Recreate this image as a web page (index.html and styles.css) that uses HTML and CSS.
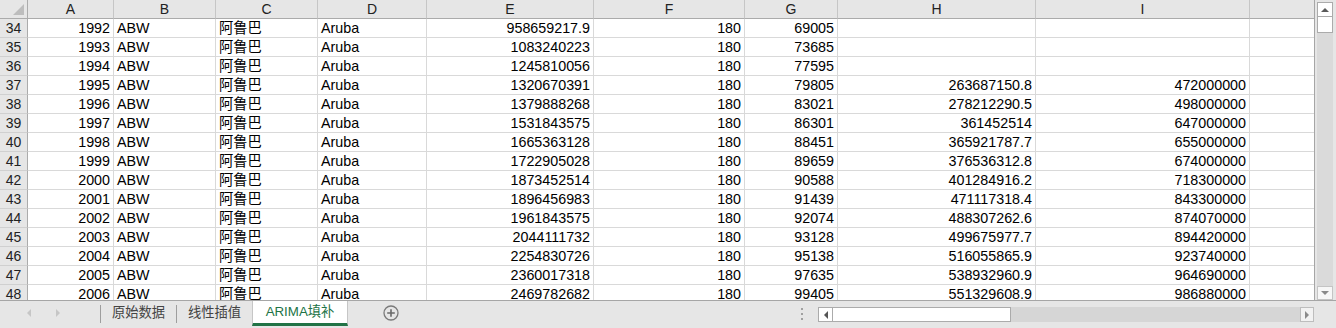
FILE: index.html
```html
<!DOCTYPE html>
<html lang="zh">
<head>
<meta charset="utf-8">
<title>ARIMA填补</title>
<link rel="stylesheet" href="styles.css">
</head>
<body>
<div class="app">
  <div class="main">
    <div class="sheet">
      <div class="corner"><svg class="tri" width="11" height="11" viewBox="0 0 11 11"><polygon points="11,0 11,11 0,11" fill="#bdbdbd"/></svg></div>
      <div class="ch">A</div><div class="ch">B</div><div class="ch">C</div><div class="ch">D</div><div class="ch">E</div><div class="ch">F</div><div class="ch">G</div><div class="ch">H</div><div class="ch">I</div><div class="ch last"></div>

      <div class="rh">34</div><div class="c n">1992</div><div class="c">ABW</div><div class="c">阿鲁巴</div><div class="c">Aruba</div><div class="c n">958659217.9</div><div class="c n">180</div><div class="c n">69005</div><div class="c n"></div><div class="c n"></div><div class="c last"></div>
      <div class="rh">35</div><div class="c n">1993</div><div class="c">ABW</div><div class="c">阿鲁巴</div><div class="c">Aruba</div><div class="c n">1083240223</div><div class="c n">180</div><div class="c n">73685</div><div class="c n"></div><div class="c n"></div><div class="c last"></div>
      <div class="rh">36</div><div class="c n">1994</div><div class="c">ABW</div><div class="c">阿鲁巴</div><div class="c">Aruba</div><div class="c n">1245810056</div><div class="c n">180</div><div class="c n">77595</div><div class="c n"></div><div class="c n"></div><div class="c last"></div>
      <div class="rh">37</div><div class="c n">1995</div><div class="c">ABW</div><div class="c">阿鲁巴</div><div class="c">Aruba</div><div class="c n">1320670391</div><div class="c n">180</div><div class="c n">79805</div><div class="c n">263687150.8</div><div class="c n">472000000</div><div class="c last"></div>
      <div class="rh">38</div><div class="c n">1996</div><div class="c">ABW</div><div class="c">阿鲁巴</div><div class="c">Aruba</div><div class="c n">1379888268</div><div class="c n">180</div><div class="c n">83021</div><div class="c n">278212290.5</div><div class="c n">498000000</div><div class="c last"></div>
      <div class="rh">39</div><div class="c n">1997</div><div class="c">ABW</div><div class="c">阿鲁巴</div><div class="c">Aruba</div><div class="c n">1531843575</div><div class="c n">180</div><div class="c n">86301</div><div class="c n">361452514</div><div class="c n">647000000</div><div class="c last"></div>
      <div class="rh">40</div><div class="c n">1998</div><div class="c">ABW</div><div class="c">阿鲁巴</div><div class="c">Aruba</div><div class="c n">1665363128</div><div class="c n">180</div><div class="c n">88451</div><div class="c n">365921787.7</div><div class="c n">655000000</div><div class="c last"></div>
      <div class="rh">41</div><div class="c n">1999</div><div class="c">ABW</div><div class="c">阿鲁巴</div><div class="c">Aruba</div><div class="c n">1722905028</div><div class="c n">180</div><div class="c n">89659</div><div class="c n">376536312.8</div><div class="c n">674000000</div><div class="c last"></div>
      <div class="rh">42</div><div class="c n">2000</div><div class="c">ABW</div><div class="c">阿鲁巴</div><div class="c">Aruba</div><div class="c n">1873452514</div><div class="c n">180</div><div class="c n">90588</div><div class="c n">401284916.2</div><div class="c n">718300000</div><div class="c last"></div>
      <div class="rh">43</div><div class="c n">2001</div><div class="c">ABW</div><div class="c">阿鲁巴</div><div class="c">Aruba</div><div class="c n">1896456983</div><div class="c n">180</div><div class="c n">91439</div><div class="c n">471117318.4</div><div class="c n">843300000</div><div class="c last"></div>
      <div class="rh">44</div><div class="c n">2002</div><div class="c">ABW</div><div class="c">阿鲁巴</div><div class="c">Aruba</div><div class="c n">1961843575</div><div class="c n">180</div><div class="c n">92074</div><div class="c n">488307262.6</div><div class="c n">874070000</div><div class="c last"></div>
      <div class="rh">45</div><div class="c n">2003</div><div class="c">ABW</div><div class="c">阿鲁巴</div><div class="c">Aruba</div><div class="c n">2044111732</div><div class="c n">180</div><div class="c n">93128</div><div class="c n">499675977.7</div><div class="c n">894420000</div><div class="c last"></div>
      <div class="rh">46</div><div class="c n">2004</div><div class="c">ABW</div><div class="c">阿鲁巴</div><div class="c">Aruba</div><div class="c n">2254830726</div><div class="c n">180</div><div class="c n">95138</div><div class="c n">516055865.9</div><div class="c n">923740000</div><div class="c last"></div>
      <div class="rh">47</div><div class="c n">2005</div><div class="c">ABW</div><div class="c">阿鲁巴</div><div class="c">Aruba</div><div class="c n">2360017318</div><div class="c n">180</div><div class="c n">97635</div><div class="c n">538932960.9</div><div class="c n">964690000</div><div class="c last"></div>
      <div class="rh">48</div><div class="c n">2006</div><div class="c">ABW</div><div class="c">阿鲁巴</div><div class="c">Aruba</div><div class="c n">2469782682</div><div class="c n">180</div><div class="c n">99405</div><div class="c n">551329608.9</div><div class="c n">986880000</div><div class="c last"></div>
    </div>
    <div class="vscroll">
      <div class="vtrack">
        <div class="vbtn up"><span class="tri-up"></span></div>
        <div class="vthumb"></div>
        <div class="vspace"></div>
        <div class="vbtn down"><span class="tri-down"></span></div>
      </div>
    </div>
  </div>
  <div class="bar">
    <div class="nav"><span class="tri-left light"></span><span class="tri-right light"></span></div>
    <span class="sep"></span>
    <div class="tab">原始数据</div>
    <span class="sep"></span>
    <div class="tab">线性插值</div>
    <div class="tab active">ARIMA填补</div>
    <div class="add"><svg width="16" height="16" viewBox="0 0 16 16"><circle cx="8" cy="8" r="7" fill="none" stroke="#7a7a7a" stroke-width="1.3"/><path d="M8 4.2V11.8M4.2 8H11.8" stroke="#6a6a6a" stroke-width="1.6"/></svg></div>
    <div class="spacer"></div>
    <div class="dots"><i></i><i></i><i></i></div>
    <div class="hscroll">
      <div class="hbtn left"><span class="tri-left"></span></div>
      <div class="hthumb"></div>
      <div class="htrack"></div>
      <div class="hbtn right"><span class="tri-right grey"></span></div>
    </div>
  </div>
</div>
</body>
</html>
```
FILE: styles.css
```css
html, body {
  margin: 0;
  padding: 0;
}
body {
  background: #e6e6e6;
}
.app {
  width: 1336px;
  height: 328px;
  overflow: hidden;
  background: #e6e6e6;
  font-family: "Liberation Sans", "Noto Sans CJK SC", sans-serif;
  color: #000;
}
.main {
  display: flex;
  height: 300px;
}
.sheet {
  width: 1315px;
  height: 300px;
  box-sizing: border-box;
  display: grid;
  grid-template-columns: 28px 86px 102px 102px 109px 167px 151px 93px 198px 214px 1fr;
  grid-auto-rows: 19px;
  overflow: hidden;
  background: #fff;
  border-right: 1px solid #a6a6a6;
}
.corner {
  background: #e6e6e6;
  border-right: 1px solid #ababab;
  border-bottom: 1px solid #ababab;
  box-sizing: border-box;
  display: flex;
  align-items: flex-end;
  justify-content: flex-end;
  padding: 0 3px 3px 0;
}
.tri {
  display: block;
}
.ch {
  background: #e6e6e6;
  border-right: 1px solid #c6c6c6;
  border-bottom: 1px solid #ababab;
  box-sizing: border-box;
  text-align: center;
  font-size: 14px;
  line-height: 18px;
  color: #222;
}
.rh {
  background: #e6e6e6;
  border-right: 1px solid #ababab;
  border-bottom: 1px solid #d0d0d0;
  box-sizing: border-box;
  text-align: center;
  font-size: 14px;
  line-height: 19px;
  color: #222;
}
.c {
  border-right: 1px solid #d9d9d9;
  border-bottom: 1px solid #d9d9d9;
  box-sizing: border-box;
  padding: 0 3px;
  font-size: 14.3px;
  line-height: 19px;
  white-space: nowrap;
  overflow: hidden;
}
.n {
  text-align: right;
}
.last {
  border-right: none;
}

/* vertical scrollbar */
.vscroll {
  width: 21px;
  height: 300px;
  padding-top: 2px;
  box-sizing: border-box;
  display: flex;
}
.vtrack {
  width: 16px;
  margin-left: 2px;
  background: #dadada;
  display: flex;
  flex-direction: column;
}
.vbtn {
  height: 15px;
  background: #fff;
  border: 1px solid #ababab;
  box-sizing: border-box;
  display: flex;
  align-items: center;
  justify-content: center;
}
.vbtn.down {
  height: 14px;
  border-color: #c4c4c4;
  background: #f7f7f7;
}
.vthumb {
  height: 16px;
  background: #fff;
  border: 1px solid #ababab;
  border-top: none;
  box-sizing: border-box;
}
.vspace {
  flex: 1;
}
.tri-up {
  width: 0;
  height: 0;
  border-left: 4px solid transparent;
  border-right: 4px solid transparent;
  border-bottom: 4px solid #5a5a5a;
}
.tri-down {
  width: 0;
  height: 0;
  border-left: 4px solid transparent;
  border-right: 4px solid transparent;
  border-top: 4px solid #8a8a8a;
}
.tri-left {
  width: 0;
  height: 0;
  border-top: 4px solid transparent;
  border-bottom: 4px solid transparent;
  border-right: 4px solid #555;
}
.tri-right {
  width: 0;
  height: 0;
  border-top: 4px solid transparent;
  border-bottom: 4px solid transparent;
  border-left: 4px solid #555;
}
.tri-left.light {
  border-right-color: #c6c6c6;
}
.tri-right.light {
  border-left-color: #c6c6c6;
}
.tri-right.grey {
  border-left-color: #8a8a8a;
}

/* bottom bar */
.bar {
  height: 28px;
  box-sizing: border-box;
  border-top: 1px solid #a6a6a6;
  display: flex;
  align-items: flex-start;
  font-size: 13.3px;
  color: #444;
}
.nav {
  width: 100px;
  height: 24px;
  display: flex;
  align-items: center;
  padding-left: 27px;
  gap: 25px;
  box-sizing: border-box;
}
.sep {
  width: 1px;
  height: 18px;
  margin-top: 4px;
  background: #9e9e9e;
}
.tab {
  width: 75px;
  height: 24px;
  line-height: 24px;
  text-align: center;
  white-space: nowrap;
  box-sizing: border-box;
}
.tab.active {
  width: 96px;
  height: 25px;
  line-height: 22px;
  background: #fff;
  color: #217346;
  border-left: 1px solid #c6c6c6;
  border-right: 1px solid #c6c6c6;
  border-bottom: 3px solid #217346;
}
.add {
  margin-left: 35px;
  margin-top: 4px;
  height: 16px;
}
.add svg {
  display: block;
}
.spacer {
  flex: 1;
}
.dots {
  width: 2px;
  margin-top: 7px;
  margin-right: 15px;
  display: flex;
  flex-direction: column;
  gap: 3px;
}
.dots i {
  display: block;
  width: 2px;
  height: 2px;
  background: #a0a0a0;
}
.hscroll {
  width: 496px;
  height: 15px;
  margin-top: 6px;
  margin-right: 22px;
  display: flex;
  background: #d6d6d6;
}
.hbtn {
  width: 15px;
  height: 15px;
  box-sizing: border-box;
  border: 1px solid #ababab;
  background: #fff;
  display: flex;
  align-items: center;
  justify-content: center;
}
.hbtn.right {
  width: 14px;
  background: #f2f2f2;
  border-color: #bdbdbd;
}
.hthumb {
  width: 178px;
  height: 15px;
  box-sizing: border-box;
  background: #fff;
  border: 1px solid #ababab;
  border-left: none;
}
.htrack {
  flex: 1;
}
```
